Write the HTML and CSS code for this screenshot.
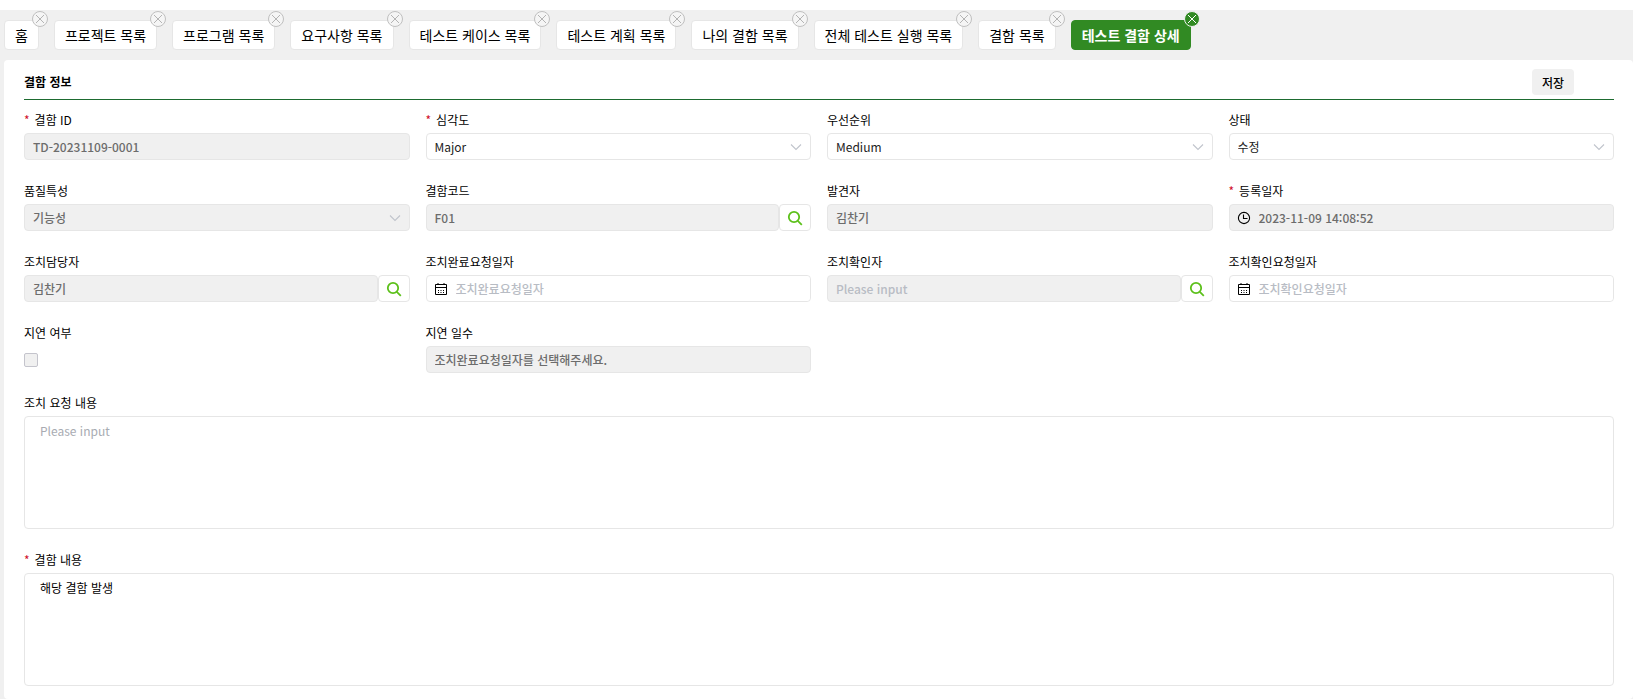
FILE: index.html
```
<!DOCTYPE html>
<html lang="ko">
<head>
  <meta charset="UTF-8" />
  <meta name="viewport" content="width=device-width, initial-scale=1" />
  <title>테스트 결함 상세</title>
  <link rel="stylesheet" href="styles.css">
</head>
<body>

  <!-- shared icons -->
  <svg class="sprite" aria-hidden="true">
    <symbol id="close" viewBox="0 0 14 14">
      <path d="M3 3l8 8M11 3l-8 8" fill="none" stroke="currentColor" />
    </symbol>
    <symbol id="arrow" viewBox="0 0 12 12">
      <path d="M1 3.5l5 5 5-5" fill="none" stroke="currentColor" stroke-width="1.1" />
    </symbol>
    <symbol id="search" viewBox="0 0 16 16">
      <circle cx="7" cy="7" r="5.2" fill="none" stroke="currentColor" stroke-width="1.8" />
      <path d="M10.8 10.8l4 4" fill="none" stroke="currentColor" stroke-width="1.8" />
    </symbol>
    <symbol id="clock" viewBox="0 0 14 14">
      <circle cx="7" cy="7" r="5.6" fill="none" stroke="currentColor" stroke-width="1.1" />
      <path d="M6.5 3.5v4h4" fill="none" stroke="currentColor" stroke-width="1.1" />
    </symbol>
    <symbol id="calendar" viewBox="0 0 14 14">
      <path d="M1.500 2.500h11v10h-11zM1.500 5.500h11M4 1v2M10 1v2" fill="none" stroke="currentColor" />
      <path d="M4 8.500h1M6.500 8.500h1M9 8.500h1M4 10.500h1M6.500 10.500h1M9 10.500h1" fill="none" stroke="currentColor" />
    </symbol>
  </svg>

  <nav class="tabs">
    <div class="tab"><a href="#">홈</a><button type="button" class="close" aria-label="닫기"><svg><use href="#close" /></svg></button></div>
    <div class="tab"><a href="#">프로젝트 목록</a><button type="button" class="close" aria-label="닫기"><svg><use href="#close" /></svg></button></div>
    <div class="tab"><a href="#">프로그램 목록</a><button type="button" class="close" aria-label="닫기"><svg><use href="#close" /></svg></button></div>
    <div class="tab"><a href="#">요구사항 목록</a><button type="button" class="close" aria-label="닫기"><svg><use href="#close" /></svg></button></div>
    <div class="tab"><a href="#">테스트 케이스 목록</a><button type="button" class="close" aria-label="닫기"><svg><use href="#close" /></svg></button></div>
    <div class="tab"><a href="#">테스트 계획 목록</a><button type="button" class="close" aria-label="닫기"><svg><use href="#close" /></svg></button></div>
    <div class="tab"><a href="#">나의 결함 목록</a><button type="button" class="close" aria-label="닫기"><svg><use href="#close" /></svg></button></div>
    <div class="tab"><a href="#">전체 테스트 실행 목록</a><button type="button" class="close" aria-label="닫기"><svg><use href="#close" /></svg></button></div>
    <div class="tab"><a href="#">결함 목록</a><button type="button" class="close" aria-label="닫기"><svg><use href="#close" /></svg></button></div>
    <div class="tab active"><a href="#">테스트 결함 상세</a><button type="button" class="close" aria-label="닫기"><svg><use href="#close" /></svg></button></div>
  </nav>

  <main>
    <form class="panel">
      <header>
        <h2>결함 정보</h2>
        <button type="button" class="save">저장</button>
      </header>

      <div class="grid">
        <div class="field">
          <label for="defectId" class="required">결함 ID</label>
          <input type="text" id="defectId" value="TD-20231109-0001" disabled />
        </div>
        <div class="field">
          <label for="severity" class="required">심각도</label>
          <div class="select">
            <select id="severity"><option>Major</option></select>
            <svg><use href="#arrow" /></svg>
          </div>
        </div>
        <div class="field">
          <label for="priority">우선순위</label>
          <div class="select">
            <select id="priority"><option>Medium</option></select>
            <svg><use href="#arrow" /></svg>
          </div>
        </div>
        <div class="field">
          <label for="status">상태</label>
          <div class="select">
            <select id="status"><option>수정</option></select>
            <svg><use href="#arrow" /></svg>
          </div>
        </div>

        <div class="field">
          <label for="quality">품질특성</label>
          <div class="select">
            <select id="quality" disabled><option>기능성</option></select>
            <svg><use href="#arrow" /></svg>
          </div>
        </div>
        <div class="field">
          <label for="code">결함코드</label>
          <div class="search">
            <input type="text" id="code" value="F01" disabled />
            <button type="button" aria-label="결함코드 검색"><svg><use href="#search" /></svg></button>
          </div>
        </div>
        <div class="field">
          <label for="finder">발견자</label>
          <input type="text" id="finder" value="김찬기" disabled />
        </div>
        <div class="field">
          <label for="regDate" class="required">등록일자</label>
          <div class="date disabled">
            <svg><use href="#clock" /></svg>
            <input type="text" id="regDate" value="2023-11-09 14:08:52" disabled />
          </div>
        </div>

        <div class="field">
          <label for="assignee">조치담당자</label>
          <div class="search">
            <input type="text" id="assignee" value="김찬기" disabled />
            <button type="button" aria-label="조치담당자 검색"><svg><use href="#search" /></svg></button>
          </div>
        </div>
        <div class="field">
          <label for="dueDate">조치완료요청일자</label>
          <div class="date">
            <svg><use href="#calendar" /></svg>
            <input type="text" id="dueDate" placeholder="조치완료요청일자" />
          </div>
        </div>
        <div class="field">
          <label for="checker">조치확인자</label>
          <div class="search">
            <input type="text" id="checker" placeholder="Please input" disabled />
            <button type="button" aria-label="조치확인자 검색"><svg><use href="#search" /></svg></button>
          </div>
        </div>
        <div class="field">
          <label for="checkDate">조치확인요청일자</label>
          <div class="date">
            <svg><use href="#calendar" /></svg>
            <input type="text" id="checkDate" placeholder="조치확인요청일자" />
          </div>
        </div>

        <div class="field">
          <label for="delayed">지연 여부</label>
          <div class="check"><input type="checkbox" id="delayed" disabled /></div>
        </div>
        <div class="field">
          <label for="delayDays">지연 일수</label>
          <input type="text" id="delayDays" value="조치완료요청일자를 선택해주세요." disabled />
        </div>
      </div>

      <div class="field">
        <label for="request">조치 요청 내용</label>
        <textarea id="request" placeholder="Please input"></textarea>
      </div>
      <div class="field">
        <label for="content" class="required">결함 내용</label>
        <textarea id="content">해당 결함 발생</textarea>
      </div>
    </form>
  </main>

</body>
</html>
```

FILE: styles.css
```
* {
  box-sizing: border-box;
}

body {
  margin: 0;
  padding-top: 10px;
  background: #fff;
  color: #000;
  font-family: "Noto Sans CJK KR", sans-serif;
  font-size: 12px;
}

input, select, textarea, button {
  font: inherit;
  color: inherit;
}

.sprite {
  display: none;
}

/* open page tabs */
.tabs {
  display: flex;
  flex-wrap: wrap;
  gap: 15px;
  padding: 10px 4px;
  background: #f0f0f0;
}

.tab {
  position: relative;
  border: 1px solid #e6e6e6;
  border-radius: 4px;
  background: #fff;
}

.tab a {
  display: block;
  padding: 0 10px;
  color: #000;
  font-size: 14px;
  line-height: 28px;
  text-decoration: none;
}

.close {
  position: absolute;
  top: -10px;
  right: -10px;
  width: 16px;
  height: 16px;
  padding: 0;
  border: 1px solid #c0c0c0;
  border-radius: 50%;
  background: #f5f5f5;
  color: #b4b4b4;
  cursor: pointer;
}

.close svg {
  display: block;
  width: 14px;
  height: 14px;
}

.tab.active {
  border-color: #318a23;
  background: #318a23;
}

.tab.active a {
  color: #fff;
  font-weight: 700;
}

.tab.active .close {
  border-color: #f0f0f0;
  background: #318a23;
  color: #fff;
}

main {
  padding-left: 4px;
  background: #f0f0f0;
}

.panel {
  padding: 9px 19px 13px 20px;
  border-radius: 4px;
  background: #fff;
}

.panel header {
  display: flex;
  align-items: center;
  justify-content: space-between;
  padding: 0 40px 4px 0;
  margin-bottom: 10px;
  border-bottom: 1px solid #1d6b30;
}

.panel h2 {
  margin: 0;
  font-size: 12px;
  font-weight: 700;
  line-height: 24px;
}

.save {
  height: 26px;
  padding: 0 10px;
  border: none;
  border-radius: 4px;
  background: #f0f0f0;
  font-weight: 500;
  cursor: pointer;
}

.grid {
  display: grid;
  grid-template-columns: repeat(4, 1fr);
  gap: 21px 16px;
  margin-bottom: 20px;
}

.field {
  min-width: 0;
}

label {
  display: block;
  margin-bottom: 3px;
  line-height: 20px;
}

.required::before {
  content: "*";
  margin-right: 5px;
  color: #d0102a;
}

.field input[type="text"], select {
  display: block;
  width: 100%;
  height: 27px;
  padding: 0 8px 1px;
  border: 1px solid #e6e6e6;
  border-radius: 4px;
  background: #fff;
  color: #222;
}

.field input[type="text"]:disabled, select:disabled {
  background: #f0f0f0;
  color: #6c6c6c;
  font-weight: 500;
  opacity: 1;
}

::placeholder {
  color: #b8bcc4;
  font-weight: 500;
  opacity: 1;
}

textarea::placeholder {
  color: #a8abb2;
  font-weight: 400;
}

.select {
  position: relative;
}

select {
  appearance: none;
}

.select svg {
  position: absolute;
  top: 8px;
  right: 9px;
  width: 12px;
  height: 12px;
  color: #c0c4cc;
  pointer-events: none;
}

.search {
  display: flex;
}

.search button {
  flex: 0 0 32px;
  display: flex;
  align-items: center;
  justify-content: center;
  padding: 0;
  border: 1px solid #e6e6e6;
  border-radius: 4px;
  background: #fff;
  color: #5cc01a;
  cursor: pointer;
}

.search svg {
  width: 16px;
  height: 16px;
}

.date {
  display: flex;
  align-items: center;
  height: 27px;
  padding-left: 7px;
  border: 1px solid #e6e6e6;
  border-radius: 4px;
}

.date.disabled {
  background: #f0f0f0;
}

.date svg {
  flex: 0 0 14px;
  height: 14px;
}

.date input[type="text"] {
  height: 25px;
  border: none;
}

.check {
  display: flex;
  align-items: center;
  height: 27px;
}

.check input {
  appearance: none;
  width: 14px;
  height: 14px;
  margin: 0;
  border: 1px solid #c4c4cc;
  border-radius: 2px;
  background: #f0f0f0;
}

textarea {
  display: block;
  width: 100%;
  height: 113px;
  padding: 4px 15px;
  margin-bottom: 21px;
  border: 1px solid #e6e6e6;
  border-radius: 4px;
  background: #fff;
  line-height: 20px;
  resize: none;
}

.field:last-child textarea {
  margin-bottom: 0;
}
```
